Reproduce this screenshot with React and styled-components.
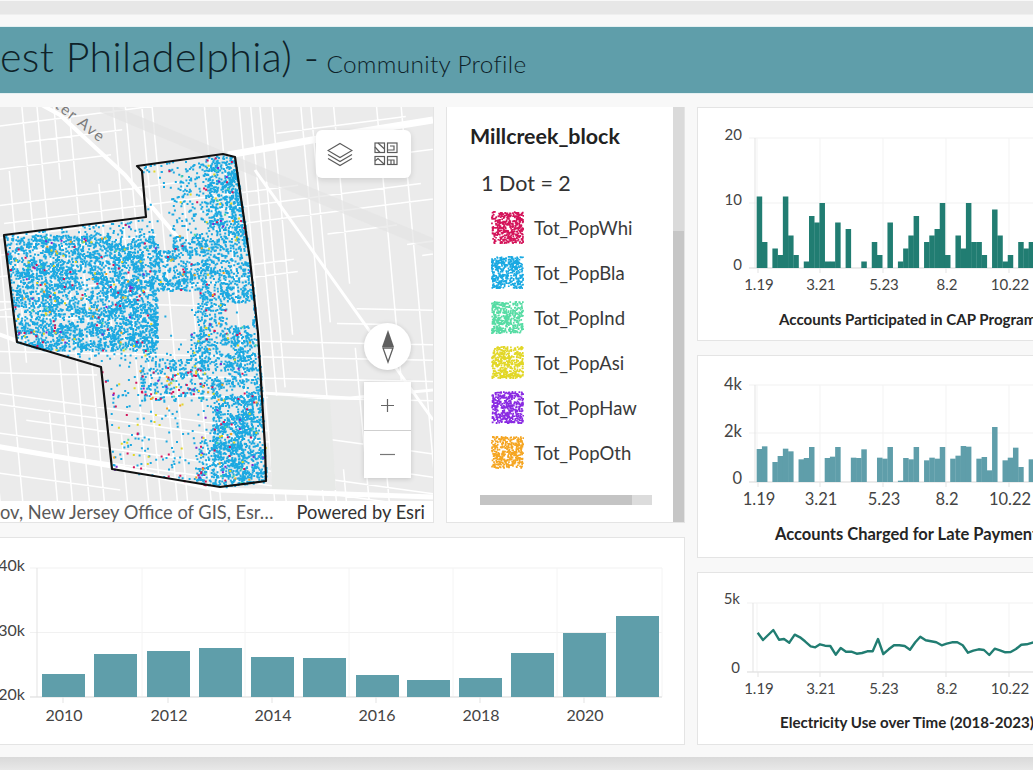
import React from "react";
import styled, { createGlobalStyle } from "styled-components";

const Global = createGlobalStyle`
  html, body { margin: 0; padding: 0; background: #f8f8f8; overflow: hidden; }
  body { font-family: Lato, "Open Sans", "Liberation Sans", sans-serif; color: #323232; }
`;

const Window = styled.div`
  width: 1033px; height: 770px; overflow: hidden; display: flex; flex-direction: column; background: #f8f8f8;
`;
const TopBar = styled.div`
  flex: 0 0 13px; margin-top: 1px; background: #e7e7e7; border-bottom: 1px solid #efefef;
`;
const Canvas = styled.div`
  width: 1260px; margin-left: -40px; padding-top: 12px; display: flex; flex-direction: column; gap: 14px; flex: 1;
`;
const Header = styled.header`
  height: 66px; background: #5f9eaa; display: flex; align-items: center; padding-left: 40px; gap: 7px; color: #0e2229; font-weight: 300; white-space: nowrap;
  box-shadow: 0 0 0 1px #e4f0f2;
`;
const HeaderMain = styled.span`
  font-size: 41.2px; letter-spacing: 0.35px; position: relative; top: -4px;
`;
const HeaderSub = styled.span`
  font-size: 24.4px; letter-spacing: 0.3px; font-weight: 300; position: relative; top: 3px;
`;
const Board = styled.div`
  display: grid; grid-template-columns: 725px 560px; column-gap: 12px;
`;
const LeftColumn = styled.div`
  display: flex; flex-direction: column; gap: 14px;
`;
const TopRow = styled.div`
  display: flex; gap: 12px; height: 416px;
`;
const RightColumn = styled.div`
  display: flex; flex-direction: column; gap: 14px;
`;
const Card = styled.section`
  box-sizing: border-box; background: #fff; border: 1px solid #e4e4e4; height: ${p => p.$h}px; overflow: hidden; flex: none;
`;
const MapPanel = styled.section`
  box-sizing: border-box; position: relative; width: 474px; background: #fff; border: 1px solid #e4e4e4; border-top: 0; display: flex; flex-direction: column; overflow: hidden;
`;
const MapSvg = styled.svg`
  display: block; flex: none;
`;
const Attribution = styled.div`
  height: 21px; display: flex; justify-content: space-between; align-items: center; padding: 0 8px 0 39px; font-size: 18.3px; color: #5a5a5a; white-space: nowrap;
`;
const AttributionStrong = styled.span`
  color: #333;
`;
const WidgetBar = styled.div`
  position: absolute; top: 23px; right: 22px; width: 95px; height: 48px; background: #fff; border-radius: 6px; display: flex; align-items: center; justify-content: space-around; padding: 0 3px 0 0; box-sizing: border-box; box-shadow: 0 2px 6px rgba(0,0,0,.12);
`;
const Compass = styled.div`
  position: absolute; top: 216px; right: 22px; width: 47px; height: 47px; border-radius: 50%; background: #fff; display: flex; align-items: center; justify-content: center; box-shadow: 0 1px 5px rgba(0,0,0,.16);
`;
const ZoomBox = styled.div`
  position: absolute; top: 275px; right: 22px; width: 47px; height: 96px; background: #fff; display: flex; flex-direction: column; box-shadow: 0 1px 5px rgba(0,0,0,.16);
`;
const ZoomButton = styled.div`
  flex: 1; display: flex; align-items: center; justify-content: center; & + & { border-top: 1px solid #cfcfcf; }
`;
const LegendPanel = styled.aside`
  box-sizing: border-box; width: 239px; background: #fff; border: 1px solid #e4e4e4; border-top: 0; display: flex; position: relative;
`;
const LegendBody = styled.div`
  flex: 1; padding: 15px 0 0 23px; min-width: 0;
`;
const LegendTitle = styled.h2`
  margin: 0; font-size: 21.4px; line-height: 28px; font-weight: 700; color: #222;
`;
const DotRule = styled.div`
  margin: 19px 0 0 11px; font-size: 21.5px; line-height: 28px; color: #333; font-weight: 400;
`;
const LegendList = styled.ul`
  list-style: none; margin: 14px 0 0 21px; padding: 0; display: flex; flex-direction: column; gap: 12px;
`;
const LegendItem = styled.li`
  display: flex; align-items: center; gap: 10px; height: 33px; font-size: 18.5px; color: #3a3a3a;
`;
const HScroll = styled.div`
  margin: 26px 0 0 10px; width: 172px; height: 10px; background: #dcdcdc; display: flex;
`;
const HThumb = styled.div`
  width: 152px; background: #c4c4c4;
`;
const VScroll = styled.div`
  flex: 0 0 11px; background: #c6c6c6; display: flex; flex-direction: column;
`;
const VTrack = styled.div`
  height: 124px; background: #dadada;
`;
const CardTitle = styled.h3`
  margin: 0; padding-left: ${p => p.$indent}px; line-height: 24px; font-size: ${p => p.$size}px; font-weight: 700; color: #252525; white-space: nowrap;
`;
const ChartSvg = styled.svg`
  display: block;
`;
const AxisText = styled.text`
  font-family: Lato, "Open Sans", sans-serif; font-size: ${p => p.$size || 15}px; fill: #444;
`;
const StreetLabel = styled.text`
  font-family: Lato, "Open Sans", sans-serif; font-size: 15.5px; fill: #7b7b7b; letter-spacing: 1.5px;
`;

function rng(seed) {
  let s = seed;
  return () => {
    s = (s * 1664525 + 1013904223) % 4294967296;
    return s / 4294967296;
  };
}

const POLY = [[137,166],[223,154],[235,157],[250,260],[258,333],[265,447],[266,481],[220,487],[112,469],[101,367],[17,342],[4,235],[146,217],[142,171]];

function inside(x, y) {
  let c = false;
  for (let i = 0, j = POLY.length - 1; i < POLY.length; j = i++) {
    const [xi, yi] = POLY[i], [xj, yj] = POLY[j];
    if ((yi > y) !== (yj > y) && x < ((xj - xi) * (y - yi)) / (yj - yi) + xi) c = !c;
  }
  return c;
}

function density(x, y) {
  if (x > 157 && x < 197 && y > 290 && y < 358 && !(y > 330 && x > 190)) return 0.02;
  if (x > 226 && x < 252 && y > 302 && y < 325) return 0.01;
  if (x > 142 && x < 168 && y > 172 && y < 216) return 0.02;
  if (x > 158 && x < 172 && y > 216 && y < 250) return 0.03;
  if (x > 205 && y < 240) return 0.95;
  if (y < 235) return 0.22;
  if (y < 290 && x > 60 && x < 150) return 0.9;
  if (y < 350 && x < 157) return 1;
  if (y < 300) return 0.85;
  if (y < 370 && x > 197) return 0.75;
  if (x > 212 && y > 395) return 1;
  if (y < 400 && x > 140) return 0.5;
  if (x > 195 && y > 440) return 0.65;
  return 0.07;
}

function cellNoise(x, y) {
  const cx = Math.floor(x / 11), cy = Math.floor(y / 9);
  const v = Math.sin(cx * 127.1 + cy * 311.7) * 43758.5453;
  const f = v - Math.floor(v);
  return 0.4 + f * 1.1;
}

const BLUE = "#1ca9e1";
const dots = (() => {
  const r = rng(42);
  const groups = { [BLUE]: "", "#d4145a": "", "#7b2ccf": "", "#e2d727": "", "#f5a623": "", "#4fd6a0": "" };
  for (let i = 0; i < 30000; i++) {
    const x = 4 + r() * 264, y = 154 + r() * 335;
    if (!inside(x, y) || r() > density(x, y) * cellNoise(x, y) * 0.72) continue;
    const sparse = y > 370 && x < 205;
    const t = r();
    let c = BLUE;
    if (t < (sparse ? 0.16 : 0.014)) c = "#d4145a";
    else if (t < (sparse ? 0.19 : 0.02)) c = "#7b2ccf";
    else if (t < (sparse ? 0.25 : 0.03)) c = "#e2d727";
    else if (t < (sparse ? 0.28 : 0.035)) c = "#f5a623";
    else if (t < (sparse ? 0.3 : 0.04)) c = "#4fd6a0";
    groups[c] += `M${x.toFixed(1)} ${y.toFixed(1)}h2v2h-2z`;
  }
  return groups;
})();

const streets = (() => {
  const r = rng(7);
  let d = "";
  for (let x = -60; x < 470; x += 9 + r() * 16) {
    let y = 107;
    while (y < 501) {
      const len = 50 + r() * 130;
      if (r() > 0.3) d += `M${(x + (y - 107) * 0.09).toFixed(1)} ${y.toFixed(1)}L${(x + (y + len - 107) * 0.09).toFixed(1)} ${(y + len).toFixed(1)}`;
      y += len;
    }
  }
  for (let y = 100; y < 520; y += 10 + r() * 16) {
    let x = -40;
    const m = y < 300 ? -0.13 : y < 400 ? 0.02 : 0.14;
    while (x < 440) {
      const len = 40 + r() * 130;
      if (r() > 0.3) d += `M${x.toFixed(1)} ${(y + (x - 200) * m).toFixed(1)}L${(x + len).toFixed(1)} ${(y + (x + len - 200) * m).toFixed(1)}`;
      x += len;
    }
  }
  return d;
})();

const BG = "#ebebeb";

function MapDrawing() {
  return (
    <MapSvg width="473" height="394" viewBox="-39 107 473 394">
      <rect x="-39" y="107" width="473" height="394" fill={BG} />
      <path d={streets} stroke="#fff" strokeWidth="1.5" fill="none" />
      <path d="M100 100L450 245L450 258L100 112z" fill="#e4e4e4" opacity=".7" />
      <path d="M268 395L330 400L336 490L272 490z" fill="#e7e9e7" />
      <path d="M-40 60L60 115L125 175L180 240" stroke="#fff" strokeWidth="4" fill="none" />
      <path d="M228 155L340 135L433 120" stroke="#fff" strokeWidth="7" fill="none" />
      <path d="M255 170L433 420" stroke="#fff" strokeWidth="3" fill="none" />
      <path d="M-40 440L112 466L220 490L433 497" stroke="#fff" strokeWidth="5" fill="none" />
      <path d="M-40 320L20 342" stroke="#fff" strokeWidth="4" fill="none" />
      <path d="M262 393L350 398L433 390" stroke="#fff" strokeWidth="3" fill="none" />
      {Object.entries(dots).map(([c, d]) => <path key={c} d={d} fill={c} />)}
      <polygon points={POLY.map(p => p.join(",")).join(" ")} fill="none" stroke="#111" strokeWidth="2.2" strokeLinejoin="round" />
      <StreetLabel transform="translate(54 107) rotate(38)">ter Ave</StreetLabel>
    </MapSvg>
  );
}

const LayersIcon = () => (
  <svg width="26" height="26" viewBox="0 0 26 26" fill="none" stroke="#5c5c5c" strokeWidth="1.2">
    <path d="M13 2.5L25 9.5L13 16.5L1 9.5z" />
    <path d="M1 13.5L13 20.5L25 13.5" />
    <path d="M1 17.5L13 24.5L25 17.5" />
  </svg>
);
const GalleryIcon = () => (
  <svg width="24" height="24" viewBox="0 0 24 24" fill="none" stroke="#5c5c5c" strokeWidth="1.2">
    <rect x="1" y="1" width="9.5" height="9.5" /><rect x="13.5" y="1" width="9.5" height="9.5" />
    <rect x="1" y="14.5" width="9.5" height="8" /><rect x="13.5" y="14.5" width="9.5" height="8" />
    <path d="M1 5L6 10.5M4 1L10.5 7M16 4H20V8H13.5M1 19L4 16.5L10.5 22.5M13.5 18H20V22.5M17 18V22.5" />
  </svg>
);
const CompassIcon = () => (
  <svg width="14" height="34" viewBox="0 0 14 34">
    <path d="M7 0L13 17H1z" fill="#5f5f5f" />
    <path d="M2 18H12L7 32z" fill="#fff" stroke="#5f5f5f" strokeWidth="1.3" />
  </svg>
);
const PlusIcon = () => (
  <svg width="15" height="15" viewBox="0 0 15 15" stroke="#666" strokeWidth="1.2"><path d="M7.5 1V14M1 7.5H14" /></svg>
);
const MinusIcon = () => (
  <svg width="15" height="15" viewBox="0 0 15 15" stroke="#777" strokeWidth="1.2"><path d="M0 7.5H15" /></svg>
);

function Swatch({ color, seed }) {
  const d = React.useMemo(() => {
    const r = rng(seed);
    let s = "";
    for (let i = 0; i < 420; i++) s += `M${(r() * 31.5).toFixed(1)} ${(r() * 31.5).toFixed(1)}h1.7v1.7h-1.7z`;
    return s;
  }, [seed]);
  return <svg width="33" height="33" viewBox="0 0 33 33"><path d={d} fill={color} /></svg>;
}

const LEGEND = [
  ["Tot_PopWhi", "#d4145a"], ["Tot_PopBla", "#19a9e2"], ["Tot_PopInd", "#57dca4"],
  ["Tot_PopAsi", "#e2d727"], ["Tot_PopHaw", "#8a2be2"], ["Tot_PopOth", "#f5a623"],
];

const XT = [["1.19", 759], ["3.21", 821], ["5.23", 884], ["8.2", 947], ["10.22", 1010]];
const GX = [756, 819, 882, 945, 1008, 1071];
const VGRID = GX.map(x => x + 1);

function Frame({ top, bottom, labels, labelY, x0 = 755, size = 15 }) {
  return (
    <>
      {labels.map(([t, y]) => <path key={t} d={`M${x0 - 6} ${y}H1140`} stroke="#f1f1f1" />)}
      {VGRID.map(x => <path key={x} d={`M${x} ${top}V${bottom}`} stroke="#f3f3f3" />)}
      <path d={`M${x0} ${top}V${bottom}`} stroke="#e3e3e3" />
      <path d={`M${x0 - 6} ${bottom}H1140`} stroke="#dfdfdf" />
      {labels.map(([t, y, base]) => <AxisText key={t} $size={size} x={x0 - 13} y={base} textAnchor="end">{t}</AxisText>)}
      {XT.map(([t, x]) => (
        <g key={t}>
          <path d={`M${x - 1} ${bottom}v5`} stroke="#e3e3e3" />
          <AxisText $size={size} x={x} y={labelY} textAnchor="middle">{t}</AxisText>
        </g>
      ))}
    </>
  );
}

const CAP = [11,4,0,3,2,11,5,2,0,1,8,7,10,1,1,7,0,6,0,0,1,0,4,2,0,7,0,1,3,5,8,0,4,5,6,10,2,0,5,3,10,4,4,2,0,9,5,1,2,0,4,3,4,3,2,5,3,4];
const LATE = [99,107,0,60,78,100,92,0,68,72,105,0,0,72,76,105,0,0,73,72,98,0,0,73,70,105,0,4,72,68,105,0,65,73,70,105,0,70,79,108,106,0,70,75,35,165,0,65,73,103,45,0,68,70,80,60,90,70];
const LINE = [[203,203],[219,225],[250,195],[267,224],[282,222],[298,233],[314,209],[330,217],[345,229],[362,244],[376,247],[390,238],[405,242],[421,243],[437,269],[452,249],[468,260],[484,260],[500,266],[516,264],[532,259],[548,259],[564,222],[580,267],[596,253],[612,241],[628,241],[644,243],[660,254],[676,232],[691,215],[707,226],[723,229],[739,232],[755,241],[770,236],[786,232],[802,232],[818,241],[834,263],[850,257],[866,253],[882,255],[898,270],[914,251],[930,256],[946,262],[962,261],[978,252],[994,239],[1010,238],[1032,232],[1060,228]];

const YEAR_BARS = [[42,674],[94,654],[147,651],[199,648],[251,657],[303,658],[356,675],[407,680],[459,678],[511,653],[563,633],[616,616]];
const YEAR_TICKS = [["2010",64],["2012",169],["2014",273],["2016",377],["2018",481],["2020",585]];

function CapChart() {
  return (
    <ChartSvg width="558" height="199" viewBox="698 108 558 199">
      <Frame top={138} bottom={268} labels={[["20",138,140],["10",203,205],["0",268,270]]} labelY={290} />
      {CAP.map((v, i) => v ? <rect key={i} x={756.7 + i * 5.23} y={268 - v * 6.5} width="5.5" height={v * 6.5} fill="#217d72" /> : null)}
    </ChartSvg>
  );
}
function LateChart() {
  return (
    <ChartSvg width="558" height="166" viewBox="698 356 558 166">
      <Frame top={385} bottom={482} labels={[["4k",385,390],["2k",433,437],["0",482,484]]} labelY={505} size={16.5} />
      {LATE.map((v, i) => v ? <rect key={i} x={756.7 + i * 5.23} y={482 - v / 3} width="5.5" height={v / 3} fill="#5f9eaa" /> : null)}
    </ChartSvg>
  );
}
function ElecChart() {
  const pts = LINE.map(([x, y]) => `${(690 + x / 3).toFixed(1)},${(565 + y / 3).toFixed(1)}`).join(" ");
  return (
    <ChartSvg width="558" height="137" viewBox="698 573 558 137">
      <Frame top={603} bottom={672} labels={[["5k",603,604],["0",672,673]]} labelY={694} x0={753} />
      <polyline points={pts} fill="none" stroke="#217d72" strokeWidth="2.4" strokeLinejoin="round" />
    </ChartSvg>
  );
}
function YearChart() {
  return (
    <ChartSvg width="723" height="206" viewBox="-39 538 723 206">
      {[568,632.5,697].map(y => <path key={y} d={`M30 ${y}H662`} stroke="#f1f1f1" />)}
      {[142,245,349,453,557,662].map(x => <path key={x} d={`M${x} 568V697`} stroke="#f4f4f4" />)}
      <path d="M37 568V697" stroke="#e3e3e3" />
      <path d="M30 697H662" stroke="#dfdfdf" />
      {YEAR_BARS.map(([x, y]) => <rect key={x} x={x} y={y} width="43" height={697 - y} fill="#5f9eaa" />)}
      {[["40k",571],["30k",636],["20k",700]].map(([t, y]) => <AxisText key={t} $size={16} x={25} y={y} textAnchor="end">{t}</AxisText>)}
      {YEAR_TICKS.map(([t, x]) => (
        <g key={t}>
          <path d={`M${x - 1} 697v6`} stroke="#e3e3e3" />
          <AxisText $size={16} x={x} y={721} textAnchor="middle">{t}</AxisText>
        </g>
      ))}
    </ChartSvg>
  );
}

const BottomBar = styled.div`
  flex: 0 0 13px; background: linear-gradient(#d9d9d9, #e8e8e8);
`;

export default function App() {
  return (
    <Window>
      <Global />
      <TopBar />
      <Canvas>
        <Header>
          <HeaderMain>est Philadelphia) -</HeaderMain>
          <HeaderSub>Community Profile</HeaderSub>
        </Header>
        <Board>
          <LeftColumn>
            <TopRow>
              <MapPanel>
                <MapDrawing />
                <Attribution>
                  <span>ov, New Jersey Office of GIS, Esr…</span>
                  <AttributionStrong>Powered by Esri</AttributionStrong>
                </Attribution>
                <WidgetBar><LayersIcon /><GalleryIcon /></WidgetBar>
                <Compass><CompassIcon /></Compass>
                <ZoomBox>
                  <ZoomButton><PlusIcon /></ZoomButton>
                  <ZoomButton><MinusIcon /></ZoomButton>
                </ZoomBox>
              </MapPanel>
              <LegendPanel>
                <LegendBody>
                  <LegendTitle>Millcreek_block</LegendTitle>
                  <DotRule>1 Dot = 2</DotRule>
                  <LegendList>
                    {LEGEND.map(([name, color], i) => (
                      <LegendItem key={name}><Swatch color={color} seed={i * 97 + 11} />{name}</LegendItem>
                    ))}
                  </LegendList>
                  <HScroll><HThumb /></HScroll>
                </LegendBody>
                <VScroll><VTrack /></VScroll>
              </LegendPanel>
            </TopRow>
            <Card $h={208}><YearChart /></Card>
          </LeftColumn>
          <RightColumn>
            <Card $h={234}>
              <CapChart />
              <CardTitle $indent={81} $size={15.1}>Accounts Participated in CAP Program Enrollment</CardTitle>
            </Card>
            <Card $h={203}>
              <LateChart />
              <CardTitle $indent={77} $size={16.5}>Accounts Charged for Late Payments (2018-2023)</CardTitle>
            </Card>
            <Card $h={173}>
              <ElecChart />
              <CardTitle $indent={82} $size={15.1}>Electricity Use over Time (2018-2023)</CardTitle>
            </Card>
          </RightColumn>
        </Board>
      </Canvas>
      <BottomBar />
    </Window>
  );
}
